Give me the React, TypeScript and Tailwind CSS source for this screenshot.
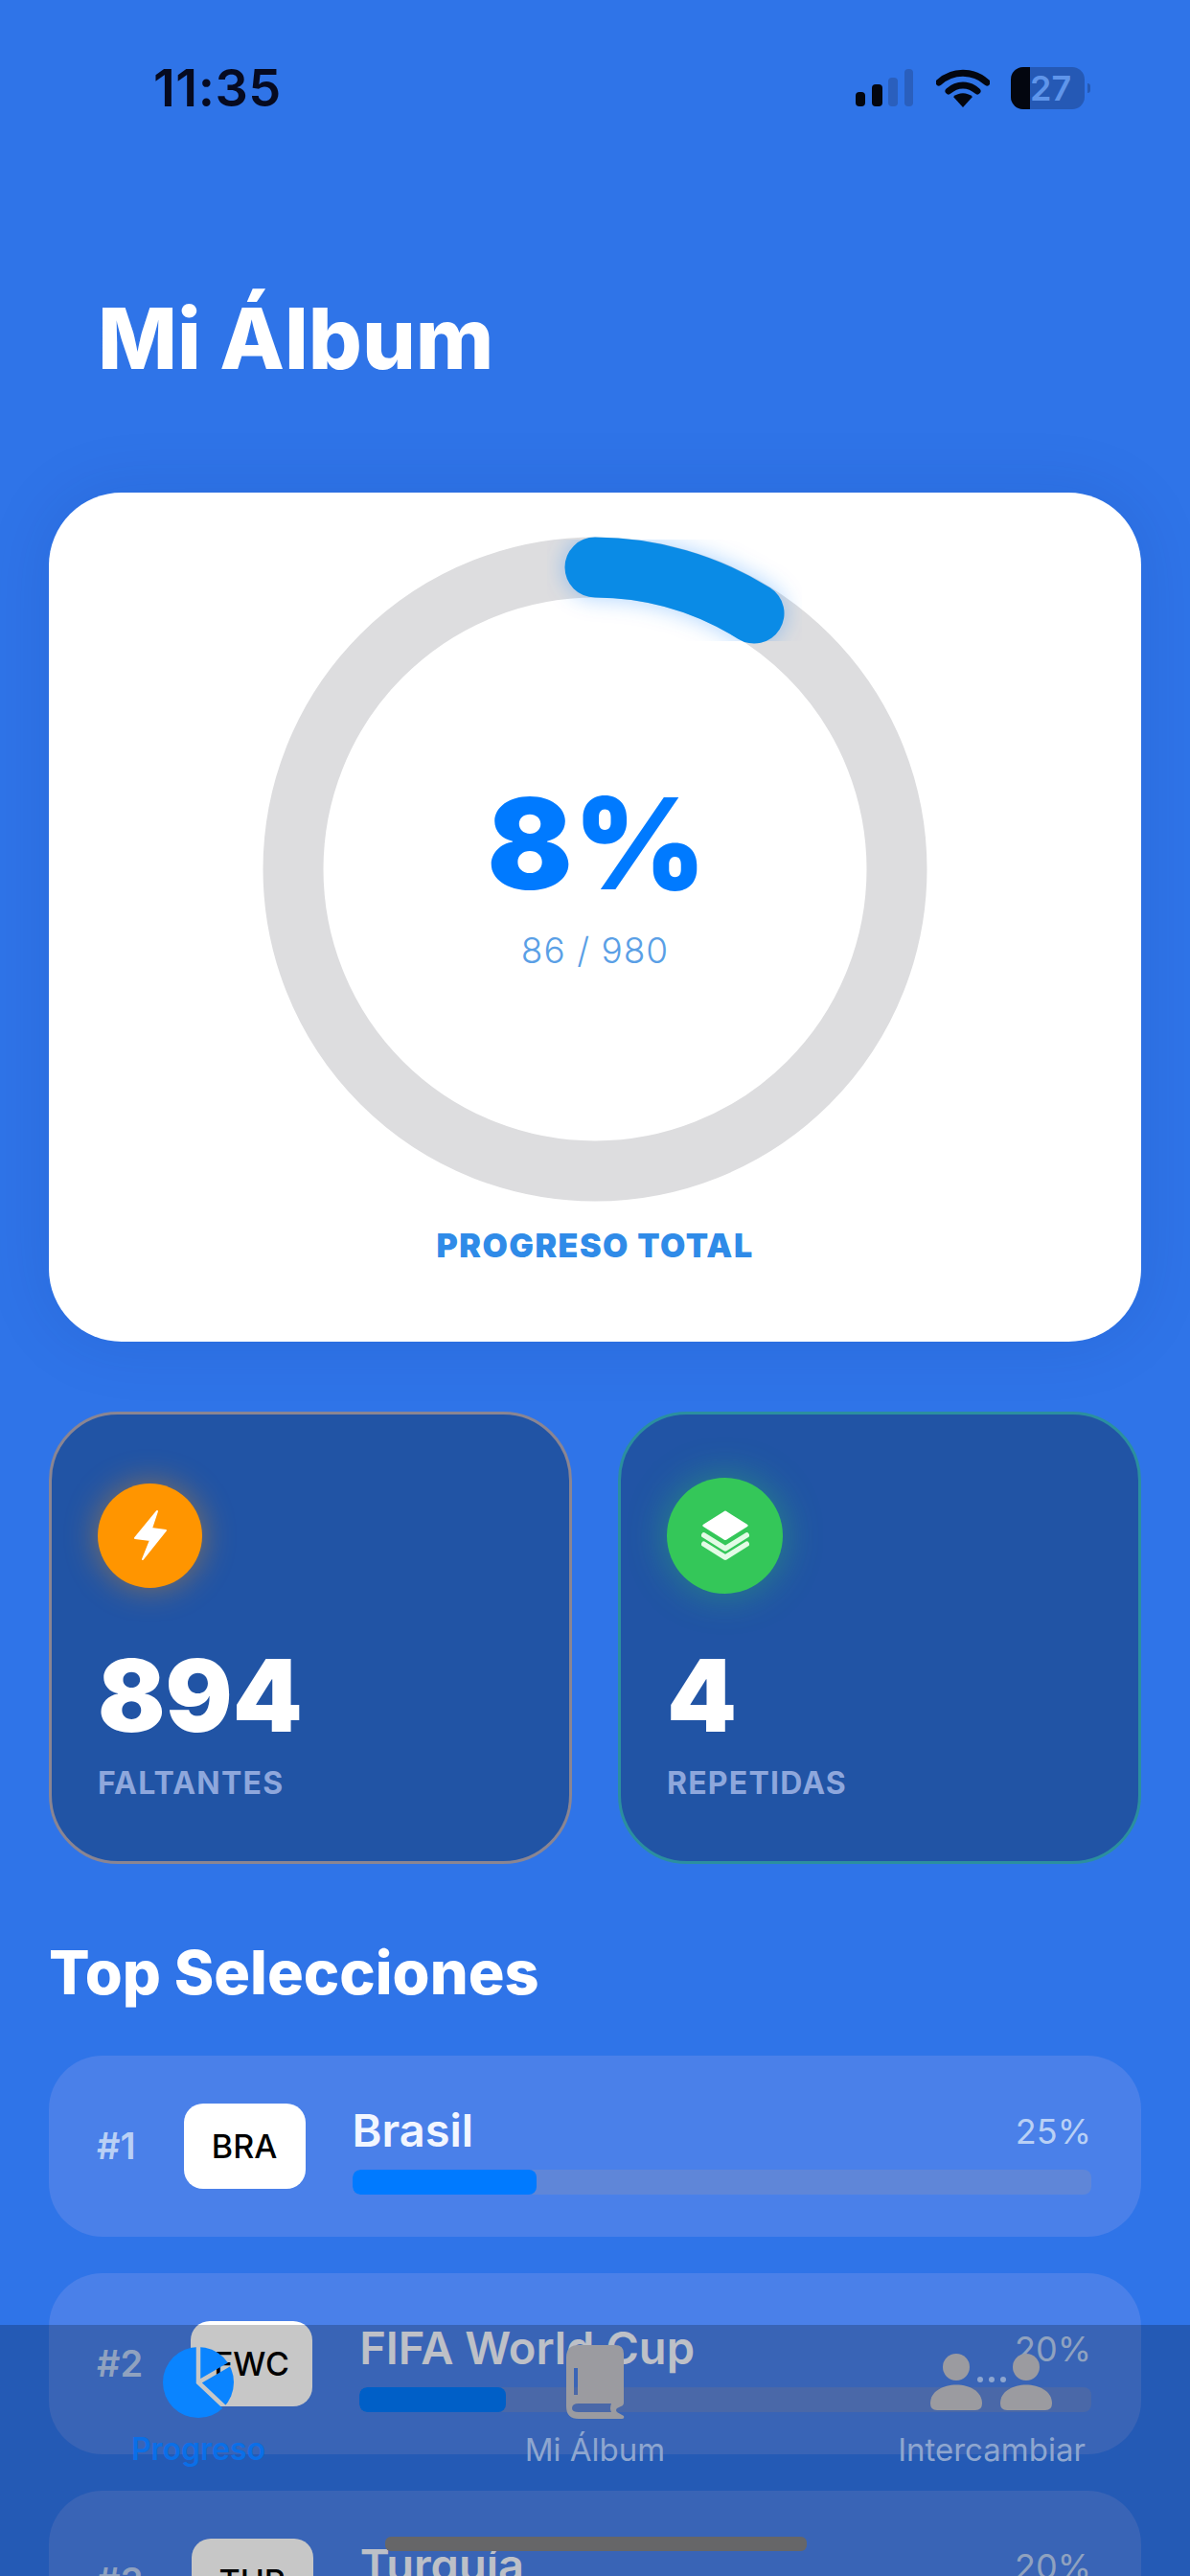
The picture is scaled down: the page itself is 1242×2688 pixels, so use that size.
const rows = [
  { rank: "#1", code: "BRA", name: "Brasil", pct: 25 },
  { rank: "#2", code: "FWC", name: "FIFA World Cup", pct: 20 },
  { rank: "#3", code: "TUR", name: "Turquía", pct: 20 },
]

function StatusBar() {
  return (
    <div className="flex items-center justify-between h-[44px] mt-[70px] pl-[160px] pr-[104px]">
      <span className="text-[54px] leading-[44px] font-semibold text-[#060a20] tracking-[0.5px]">11:35</span>
      <div className="flex items-center">
        <svg width="62" height="40" viewBox="0 0 62 40">
          <rect x="1" y="24" width="10" height="15" rx="4" fill="#03060f" />
          <rect x="18" y="16" width="11" height="23" rx="4" fill="#03060f" />
          <rect x="35" y="9" width="10" height="30" rx="4" fill="#2a5fbd" />
          <rect x="52" y="0" width="9" height="39" rx="4" fill="#2a5fbd" />
        </svg>
        <svg className="ml-[23px]" width="56" height="42" viewBox="0 0 56 42">
          <path d="M3 15 C17 2 39 2 53 15" fill="none" stroke="#03060f" strokeWidth="7" strokeLinecap="round" />
          <path d="M13 24 C22 16 34 16 43 24" fill="none" stroke="#03060f" strokeWidth="7" strokeLinecap="round" />
          <path d="M18 30 C24 25 32 25 38 30 L28 41 Z" fill="#03060f" />
        </svg>
        <div className="relative ml-[22px] w-[77px] h-[44px] rounded-[13px] bg-[#2559b5] overflow-hidden">
          <div className="absolute left-0 top-0 bottom-0 w-[20px] bg-[#03060f]" />
          <span className="absolute left-[20px] right-[19px] top-0 text-center text-[36px] leading-[44px] font-semibold text-[#5f95ea]">27</span>
        </div>
        <div className="ml-[3px] w-[3px] h-[10px] rounded-r-full bg-[#2559b5]" />
      </div>
    </div>
  )
}

function Ring() {
  return (
    <div className="relative w-[700px] h-[700px]">
      <svg width="700" height="700" viewBox="0 0 700 700" className="overflow-visible">
        <defs>
          <filter id="glow" x="-30%" y="-60%" width="160%" height="220%">
            <feGaussianBlur stdDeviation="11" />
          </filter>
        </defs>
        <circle cx="350" cy="350" r="315" fill="none" stroke="#dddddf" strokeWidth="63" />
        <path d="M350 35 A315 315 0 0 1 516 83" fill="none" stroke="#007aff" strokeOpacity="0.3" strokeWidth="66" strokeLinecap="round" filter="url(#glow)" />
        <path d="M350 35 A315 315 0 0 1 516 83" fill="none" stroke="#0a8be6" strokeWidth="63" strokeLinecap="round" />
      </svg>
      <div className="absolute inset-0 flex flex-col items-center">
        <span className="mt-[248px] ml-[4px] text-[132px] leading-[150px] font-black text-[#007aff] tracking-[1px]">8%</span>
        <span className="mt-[15px] text-[37px] leading-[44px] font-light text-[#5a9fe6] tracking-[1px]">86 / 980</span>
      </div>
    </div>
  )
}

function BoltIcon() {
  return (
    <svg width="36" height="54" viewBox="0 0 36 54">
      <path d="M25 2 L2 30 L18 32 L10 52 L34 22 L19 20 Z" fill="#fff" stroke="#fff" strokeWidth="2" strokeLinejoin="round" />
    </svg>
  )
}

function StackIcon() {
  return (
    <svg width="50" height="52" viewBox="0 0 54 56">
      <path d="M27 2 L51 17 L27 32 L3 17 Z" fill="#fff" stroke="#fff" strokeWidth="3" strokeLinejoin="round" />
      <path d="M3 28 L27 43 L51 28" fill="none" stroke="#e3fbe6" strokeWidth="6" strokeLinejoin="round" strokeLinecap="round" />
      <path d="M3 38 L27 53 L51 38" fill="none" stroke="#e3fbe6" strokeWidth="6" strokeLinejoin="round" strokeLinecap="round" />
    </svg>
  )
}

function PieIcon() {
  return (
    <svg width="76" height="76" viewBox="0 0 76 76">
      <defs>
        <mask id="pie-cut">
          <rect width="76" height="76" fill="#fff" />
          <path d="M38 0 L38 38 L72 70 M38 38 L76 16" fill="none" stroke="#000" strokeWidth="4.5" />
        </mask>
      </defs>
      <circle cx="38" cy="38" r="37" fill="#0a84ff" mask="url(#pie-cut)" />
    </svg>
  )
}

function BookIcon() {
  return (
    <svg width="62" height="78" viewBox="0 0 62 78">
      <path
        fillRule="evenodd"
        d="M14 0 H52 Q61 0 61 9 V60 Q61 63 58 64 L54 66 Q52 68 54 70 L61 74 Q62 77 59 77 H14 Q1 77 1 64 V13 Q1 0 14 0 Z M9 24 V52 H13 V24 Z M14 61 Q7 61 7 66 Q7 70 14 70 H48 Q46 66 48 61 Z"
        fill="#9b9ba0"
      />
    </svg>
  )
}

function PeopleIcon() {
  return (
    <svg width="130" height="62" viewBox="0 0 130 62">
      <circle cx="28" cy="15" r="14" fill="#9b9ba0" />
      <path d="M1 53 C1 27 55 27 55 53 Q55 60 48 60 H8 Q1 60 1 53 Z" fill="#9b9ba0" />
      <circle cx="101" cy="15" r="14" fill="#9b9ba0" />
      <path d="M74 53 C74 27 128 27 128 53 Q128 60 121 60 H81 Q74 60 74 53 Z" fill="#9b9ba0" />
      <circle cx="53" cy="28" r="3" fill="#8ea6cf" />
      <circle cx="65" cy="28" r="3" fill="#8ea6cf" />
      <circle cx="77" cy="28" r="3" fill="#8ea6cf" />
    </svg>
  )
}

function StatCard({ value, label, border, children }: { value: string; label: string; border: string; children: React.ReactNode }) {
  return (
    <div className={`flex-1 h-[472px] rounded-[72px] border-[3px] bg-[#2154a5] pl-[48px] ${border}`}>
      <div className="h-[238px] pt-[14px] flex items-center">{children}</div>
      <div className="text-[104px] leading-[110px] font-black text-white">{value}</div>
      <div className="mt-[17px] text-[32px] leading-[40px] font-bold text-[#8ea7dc] tracking-[1.2px]">{label}</div>
    </div>
  )
}

function Row({ rank, code, name, pct }: { rank: string; code: string; name: string; pct: number }) {
  return (
    <div className="flex items-center shrink-0 h-[189px] rounded-[56px] bg-[#4a80e9] pl-[50px] pr-[52px]">
      <span className="text-[38px] font-semibold text-[#b9d0f5]">{rank}</span>
      <div className="ml-[50px] w-[127px] h-[89px] rounded-[20px] bg-white flex items-center justify-center text-[34px] font-medium text-black">
        {code}
      </div>
      <div className="flex-1 ml-[49px] mt-[8px]">
        <div className="flex items-center justify-between h-[52px]">
          <span className="text-[47px] font-semibold text-[#f2f6ff]">{name}</span>
          <span className="text-[36px] text-[#b9d0f5]">{pct}%</span>
        </div>
        <div className="mt-[14px] h-[26px] rounded-[8px] bg-[#5f86d8] overflow-hidden">
          <div className="h-full rounded-[8px] bg-[#007aff]" style={{ width: `${pct}%` }} />
        </div>
      </div>
    </div>
  )
}

function TabBar() {
  return (
    <div className="absolute left-0 right-0 bottom-0 h-[262px] bg-black/[.22] grid grid-cols-3 pt-[21px]">
      <div className="flex flex-col items-center">
        <div className="h-[78px] flex items-center"><PieIcon /></div>
        <span className="mt-[9px] text-[32px] leading-[44px] font-semibold text-[#0a6fe8]">Progreso</span>
      </div>
      <div className="flex flex-col items-center">
        <div className="h-[78px] flex items-center"><BookIcon /></div>
        <span className="mt-[9px] text-[33px] leading-[44px] text-[#8ea6cf]">Mi Álbum</span>
      </div>
      <div className="flex flex-col items-center">
        <div className="h-[78px] flex items-center"><PeopleIcon /></div>
        <span className="mt-[9px] text-[33px] leading-[44px] text-[#8ea6cf]">Intercambiar</span>
      </div>
      <div className="absolute left-[402px] bottom-[26px] w-[440px] h-[15px] rounded-[6px] bg-[#666668]" />
    </div>
  )
}

export default function App() {
  return (
    <div className="relative w-[1242px] h-[2688px] overflow-hidden bg-[#2f74e8] font-['Inter',sans-serif]">
      <StatusBar />
      <h1 className="mt-[189px] pl-[102px] text-[88px] leading-[100px] font-extrabold text-white">Mi Álbum</h1>
      <div className="px-[51px]">
        <div className="mt-[111px] h-[886px] rounded-[76px] bg-white flex flex-col items-center pt-[43px] shadow-[0_0_70px_rgba(10,40,120,0.12)]">
          <Ring />
          <span className="mt-[21px] text-[34px] leading-[44px] font-black text-[#2f8be8] tracking-[1.5px]">PROGRESO TOTAL</span>
        </div>
        <div className="mt-[73px] flex gap-[48px]">
          <StatCard value="894" label="FALTANTES" border="border-[#8a8592]">
            <div className="w-[109px] h-[109px] rounded-full bg-[#ff9500] flex items-center justify-center shadow-[0_0_34px_rgba(255,149,0,0.45)]">
              <BoltIcon />
            </div>
          </StatCard>
          <StatCard value="4" label="REPETIDAS" border="border-[#2b8f9f]">
            <div className="w-[121px] h-[121px] rounded-full bg-[#34c759] flex items-center justify-center shadow-[0_0_40px_rgba(52,199,89,0.45)]">
              <StackIcon />
            </div>
          </StatCard>
        </div>
        <h2 className="mt-[78px] text-[63px] leading-[70px] font-extrabold text-white">Top Selecciones</h2>
        <div className="mt-[52px] flex flex-col gap-[38px]">
          {rows.map((row) => (
            <Row key={row.rank} {...row} />
          ))}
        </div>
      </div>
      <TabBar />
    </div>
  )
}
